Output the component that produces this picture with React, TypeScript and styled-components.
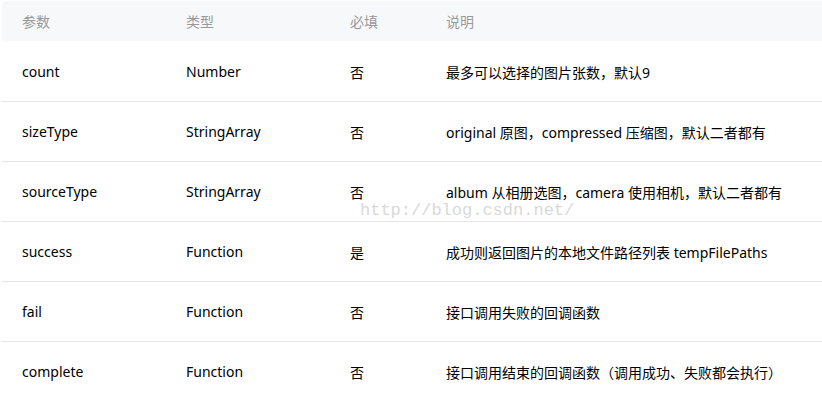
import React from "react";
import styled, { createGlobalStyle } from "styled-components";

const Global = createGlobalStyle`
  html, body { margin: 0; padding: 0; background: #fff; }
  body { font-family: "Noto Sans", "Noto Sans CJK SC", sans-serif; }
`;

const Page = styled.div`
  position: relative;
  width: 822px;
  height: 401px;
  overflow: hidden;
  padding: 1px 0 0 2px;
  box-sizing: border-box;
`;

const Table = styled.div`
  display: grid;
  grid-template-columns: 164px 164px 96px 1fr;
`;

const Row = styled.div`
  display: contents;
`;

const Cell = styled.div<{ $head?: boolean; $first?: boolean }>`
  height: ${(p) => (p.$head ? "40px" : "59px")};
  display: flex;
  align-items: center;
  padding-left: 20px;
  font-size: 14px;
  white-space: nowrap;
  color: ${(p) => (p.$head ? "#999" : "#000")};
  background: ${(p) => (p.$head ? "#f7f8fa" : "#fff")};
  border-top: ${(p) =>
    p.$head ? "none" : p.$first ? "1px solid transparent" : "1px solid #e5e5e5"};
`;

const Watermark = styled.div`
  position: absolute;
  left: 360px;
  top: 201px;
  font-family: "Liberation Mono", monospace;
  font-size: 17px;
  color: #d9d9d9;
  pointer-events: none;
`;

const rows: [string, string, string, string][] = [
  ["count", "Number", "否", "最多可以选择的图片张数，默认9"],
  ["sizeType", "StringArray", "否", "original 原图，compressed 压缩图，默认二者都有"],
  ["sourceType", "StringArray", "否", "album 从相册选图，camera 使用相机，默认二者都有"],
  ["success", "Function", "是", "成功则返回图片的本地文件路径列表 tempFilePaths"],
  ["fail", "Function", "否", "接口调用失败的回调函数"],
  ["complete", "Function", "否", "接口调用结束的回调函数（调用成功、失败都会执行）"],
];

export default function App() {
  return (
    <Page>
      <Global />
      <Table>
        <Row>
          {["参数", "类型", "必填", "说明"].map((h) => (
            <Cell key={h} $head>
              {h}
            </Cell>
          ))}
        </Row>
        {rows.map((r, i) => (
          <Row key={r[0]}>
            {r.map((c, j) => (
              <Cell key={j} $first={i === 0}>
                {c}
              </Cell>
            ))}
          </Row>
        ))}
      </Table>
      <Watermark>http://blog.csdn.net/</Watermark>
    </Page>
  );
}
